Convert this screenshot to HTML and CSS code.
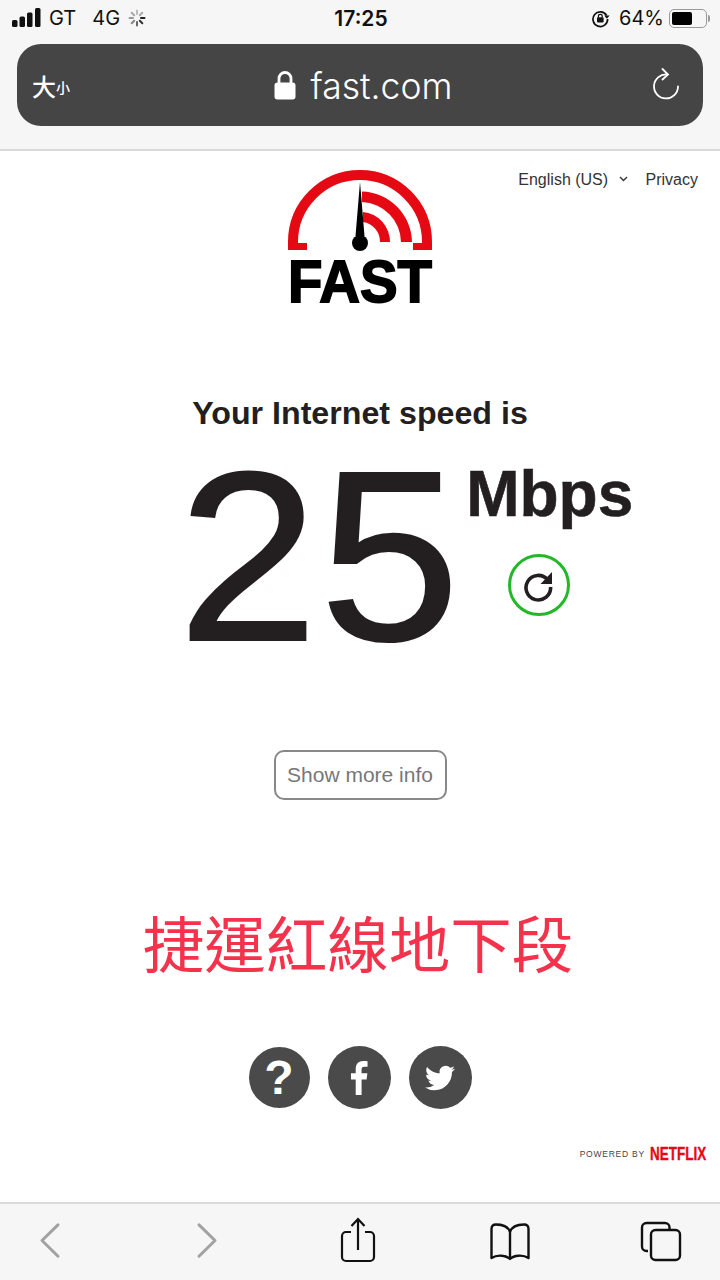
FILE: index.html
```html
<!DOCTYPE html>
<html lang="en">

<head>
    <meta charset="UTF-8" />
    <meta name="viewport" content="width=device-width, initial-scale=1.0" />
    <title>Internet Speed</title>
    <link rel="stylesheet" href="styles.css">
</head>

<body>

    <header class="browser-top">
        <div class="status-bar">
            <div class="status-left">
                <svg class="signal" width="30" height="20" viewBox="0 0 30 20">
                    <rect x="0" y="12" width="5.500" height="7" rx="1.500" />
                    <rect x="7.500" y="8.500" width="5.500" height="10.500" rx="1.500" />
                    <rect x="15" y="4.500" width="5.500" height="14.500" rx="1.500" />
                    <rect x="23" y="0" width="5.500" height="19" rx="1.500" />
                </svg>
                <span class="carrier">GT</span>
                <span class="network">4G</span>
                <svg class="spinner" width="18" height="18" viewBox="0 0 18 18" stroke-width="2" stroke-linecap="round">
                    <path d="M9 1.500V5" stroke="#bbb" />
                    <path d="M14.300 3.700L11.800 6.200" stroke="#aaa" />
                    <path d="M16.500 9H13" stroke="#222" />
                    <path d="M14.300 14.300L11.800 11.800" stroke="#333" />
                    <path d="M9 16.500V13" stroke="#666" />
                    <path d="M3.700 14.300L6.200 11.800" stroke="#888" />
                    <path d="M1.500 9H5" stroke="#999" />
                    <path d="M3.700 3.700L6.200 6.200" stroke="#aaa" />
                </svg>
            </div>
            <div class="status-time">17:25</div>
            <div class="status-right">
                <svg class="rotation-lock" width="19" height="19" viewBox="0 0 19 19">
                    <path d="M15.600 6.500A7.300 7.300 0 1 0 16.600 10" fill="none" stroke="#111" stroke-width="1.700" />
                    <path d="M13.200 6.400h5.400l-2.700 3.400z" fill="#111" />
                    <rect x="6" y="8.300" width="6.600" height="5.200" rx="1" fill="#111" />
                    <path d="M7.400 8.500V7.300a1.900 1.900 0 0 1 3.800 0v1.200" fill="none" stroke="#111" stroke-width="1.200" />
                </svg>
                <span class="battery-pct">64%</span>
                <div class="battery">
                    <div class="battery-fill" style="width: 64%"></div>
                </div>
                <div class="battery-nub"></div>
            </div>
        </div>

        <div class="address-bar">
            <div class="text-size"><span class="big">大</span><span class="small">小</span></div>
            <div class="url">
                <svg width="22" height="30" viewBox="0 0 22 30">
                    <path d="M5 14V8.500a6 6 0 0 1 12 0V14" fill="none" stroke="#fff" stroke-width="2.800" />
                    <rect x="0.500" y="12.500" width="21" height="17" rx="3" fill="#fff" />
                </svg>
                <span class="url-text">fast.com</span>
            </div>
            <svg class="reload" width="30" height="34" viewBox="0 0 30 34" fill="none" stroke="#fff" stroke-width="1.800" stroke-linecap="round">
                <path d="M16 6.500A12 12 0 1 0 27 18.500" />
                <path d="M11.500 1L17 6.500L11.500 11.500" />
            </svg>
        </div>
    </header>

    <main class="page">
        <div class="page-top">
            <svg class="logo" width="170" height="150" viewBox="275 168 170 150">
                <path d="M293 248V242a67 67 0 0 1 134 0V248" fill="none" stroke="#e50914" stroke-width="10" />
                <rect x="288" y="243" width="19" height="7" fill="#e50914" />
                <rect x="413" y="243" width="19" height="7" fill="#e50914" />
                <path d="M362 191.500A51.500 51.500 0 0 1 412 242H401A40.500 40.500 0 0 0 362 202Z" fill="#e50914" />
                <path d="M363 212A30 30 0 0 1 390 242H380A20 20 0 0 0 363 222Z" fill="#e50914" />
                <path d="M360 182L364.500 236H355.500Z" fill="#000" />
                <circle cx="360" cy="243" r="8" fill="#000" />
                <text class="logo-text" x="288" y="302" textLength="144" lengthAdjust="spacingAndGlyphs">FAST</text>
            </svg>
            <nav class="top-links">
                <a class="lang">English (US)
                    <svg width="9" height="6" viewBox="0 0 9 6" fill="none" stroke="#333" stroke-width="1.400">
                        <path d="M1 1l3.500 3.500L8 1" />
                    </svg>
                </a>
                <a>Privacy</a>
            </nav>
        </div>

        <h1 class="speed-title">Your Internet speed is</h1>

        <div class="speed-row">
            <div class="speed-value">25</div>
            <div class="speed-side">
                <div class="speed-units">Mbps</div>
                <div class="retest">
                    <svg width="34" height="34" viewBox="0 0 34 34" fill="none">
                        <path d="M25.500 11.500A12.300 12.300 0 1 0 28.600 19" stroke="#231f20" stroke-width="3.600" />
                        <path d="M18.500 16L30 4V16Z" fill="#231f20" />
                    </svg>
                </div>
            </div>
        </div>

        <button class="more-info">Show more info</button>

        <div class="caption">捷運紅線地下段</div>

        <div class="social">
            <div class="social-btn help">?</div>
            <div class="social-btn">
                <svg width="19" height="36" viewBox="0 0 20 38" fill="#fff">
                    <path d="M6 37V20.500H1V14H6V9.500C6 4 9 1 14 1C16 1 18 1.200 18.500 1.300V7H15C12.800 7 12.200 8 12.200 10V14H18.300L17.500 20.500H12.200V37Z" />
                </svg>
            </div>
            <div class="social-btn">
                <svg width="30" height="30" viewBox="0 0 24 24" fill="#fff">
                    <path d="M23.953 4.570a10 10 0 01-2.825.775 4.958 4.958 0 002.163-2.723c-.951.555-2.005.959-3.127 1.184a4.920 4.920 0 00-8.384 4.482C7.690 8.095 4.067 6.130 1.640 3.162a4.822 4.822 0 00-.666 2.475c0 1.710.870 3.213 2.188 4.096a4.904 4.904 0 01-2.228-.616v.060a4.923 4.923 0 003.946 4.827 4.996 4.996 0 01-2.212.085 4.936 4.936 0 004.604 3.417 9.867 9.867 0 01-6.102 2.105c-.390 0-.779-.023-1.170-.067a13.995 13.995 0 007.557 2.209c9.053 0 13.998-7.496 13.998-13.985 0-.210 0-.420-.015-.630A9.935 9.935 0 0024 4.590z" />
                </svg>
            </div>
        </div>

        <div class="powered">
            <span>POWERED BY</span>
            <span class="netflix">NETFLIX</span>
        </div>
    </main>

    <footer class="toolbar">
        <svg class="tool tool-back" width="44" height="44" viewBox="0 0 44 44" fill="none" stroke="#a2a2a2" stroke-width="3" stroke-linecap="round" stroke-linejoin="round">
            <path d="M30 7L14 23L30 39" transform="translate(0 -1) scale(1 .98)" />
        </svg>
        <svg class="tool" width="44" height="44" viewBox="0 0 44 44" fill="none" stroke="#a2a2a2" stroke-width="3" stroke-linecap="round" stroke-linejoin="round">
            <path d="M14 7L30 23L14 39" transform="translate(0 -1) scale(1 .98)" />
        </svg>
        <svg class="tool tool-share" width="44" height="46" viewBox="0 0 44 46" fill="none" stroke="#111" stroke-width="2.200">
            <path d="M15 15H10A4 4 0 0 0 6 19V40A4 4 0 0 0 10 44H34A4 4 0 0 0 38 40V19A4 4 0 0 0 34 15H29" />
            <path d="M22 33V2M15.500 9L22 2L28.500 9" />
        </svg>
        <svg class="tool tool-book" width="44" height="44" viewBox="0 0 44 44" fill="none" stroke="#111" stroke-width="2.400" stroke-linejoin="round">
            <path d="M22 12C20 6 14 4.500 8 4.500C5 4.500 3.500 6 3.500 9V38C9 34.500 18 35 22 39C26 35 35 34.500 40.500 38V9C40.500 6 39 4.500 36 4.500C30 4.500 24 6 22 12ZM22 12V39" />
        </svg>
        <svg class="tool" width="44" height="44" viewBox="0 0 44 44" fill="none" stroke="#111" stroke-width="2.400">
            <path d="M9 32H7.500A4.500 4.500 0 0 1 3 27.500V8.500A4.500 4.500 0 0 1 7.500 4H26A4.500 4.500 0 0 1 30.500 8.500V11" />
            <rect x="12" y="11" width="29" height="30" rx="4.500" />
        </svg>
    </footer>

</body>

</html>
```

FILE: styles.css
```css
html,
body {
    margin: 0;
    padding: 0;
    background: #fff;
    font-family: 'Liberation Sans', Arial, sans-serif;
    color: #231f20;
}

body {
    width: 720px;
    height: 1280px;
    overflow: hidden;
    display: flex;
    flex-direction: column;
}

/* Safari chrome */
.browser-top {
    height: 151px;
    box-sizing: border-box;
    background: #f6f6f6;
    border-bottom: 2px solid #dadada;
}

.status-bar {
    height: 36px;
    padding: 0 10px 0 12px;
    display: grid;
    grid-template-columns: 1fr auto 1fr;
    align-items: center;
    font-family: Inter, sans-serif;
    font-size: 20px;
    color: #111;
}

.status-left,
.status-right {
    display: flex;
    align-items: center;
}

.status-right {
    justify-content: flex-end;
}

.signal {
    fill: #111;
}

.carrier {
    margin-left: 7px;
}

.network {
    margin-left: 16px;
}

.spinner {
    margin-left: 8px;
}

.status-time {
    font-size: 21px;
    font-weight: 600;
}

.battery-pct {
    margin-left: 9px;
}

.battery {
    width: 38px;
    height: 19px;
    margin-left: 5px;
    padding: 2px;
    box-sizing: border-box;
    border: 1.5px solid #999;
    border-radius: 5px;
}

.battery-fill {
    height: 100%;
    background: #000;
    border-radius: 2px;
}

.battery-nub {
    width: 2px;
    height: 7px;
    margin-left: 1px;
    background: #999;
    border-radius: 0 2px 2px 0;
}

.rotation-lock {
    flex: none;
}

.address-bar {
    height: 82px;
    margin: 8px 17px 0;
    padding: 0 15px;
    display: grid;
    grid-template-columns: 1fr auto 1fr;
    align-items: center;
    background: #454545;
    border-radius: 24px;
    color: #fff;
}

.text-size {
    font-family: 'Noto Sans CJK TC', sans-serif;
    font-weight: 500;
    display: flex;
    align-items: center;
}

.big {
    font-size: 24px;
}

.small {
    font-size: 14px;
    margin-top: 3px;
}

.url {
    display: flex;
    align-items: center;
    gap: 15px;
    margin-left: 6px;
    font-family: Inter, sans-serif;
    font-size: 35.5px;
    font-weight: 300;
}

.url-text {
    margin-top: 3px;
}

.reload {
    justify-self: end;
    margin-right: 7px;
}

/* page */
.page {
    flex: 1;
    display: flex;
    flex-direction: column;
    align-items: center;
}

.page-top {
    width: 100%;
    height: 136px;
    margin-top: 17px;
    display: grid;
    grid-template-columns: 1fr auto 1fr;
}

.logo {
    grid-column: 2;
}

.logo-text {
    font-family: 'Liberation Sans', sans-serif;
    font-weight: 700;
    font-size: 60px;
    stroke: #000;
    stroke-width: 1.8px;
    fill: #000;
}

.top-links {
    display: flex;
    justify-content: flex-end;
    gap: 18px;
    padding: 2px 22px 0 0;
    font-size: 16px;
    color: #333;
    line-height: 20px;
}

.lang svg {
    margin: 0 0 3px 6px;
}

.speed-title {
    margin: 90px 0 0;
    font-size: 32.2px;
    line-height: 38px;
    font-weight: 700;
}

.speed-row {
    align-self: flex-start;
    display: flex;
    margin: 2px 0 0 178px;
    height: 240px;
}

.speed-value {
    font-size: 242px;
    line-height: 200px;
    height: 200px;
    margin-top: 22px;
    letter-spacing: 1.8px;
    transform: scaleX(1.04);
    transform-origin: left center;
    -webkit-text-stroke: 2px #231f20;
}

.speed-side {
    margin-left: 15.4px;
    display: flex;
    flex-direction: column;
    align-items: center;
}

.speed-units {
    font-size: 64px;
    font-weight: 700;
    line-height: 76px;
    margin-top: 22px;
    -webkit-text-stroke: 0.6px #231f20;
}

.retest {
    width: 62px;
    height: 62px;
    margin: 22px 21px 0 0;
    box-sizing: border-box;
    border: 3px solid #22b82a;
    border-radius: 50%;
    display: flex;
    align-items: center;
    justify-content: center;
}

.more-info {
    width: 173px;
    height: 50px;
    margin-top: 76px;
    padding: 0;
    background: #fff;
    border: 2px solid #888;
    border-radius: 10px;
    color: #777;
    font-family: 'Liberation Sans', sans-serif;
    font-size: 21px;
}

.caption {
    margin-top: 103px;
    font-family: 'Noto Sans CJK TC', sans-serif;
    font-size: 61.5px;
    line-height: 78px;
    color: #f5324b;
    transform: translateX(-2px);
}

.social {
    display: flex;
    gap: 18px;
    margin-top: 65px;
    align-items: center;
}

.social-btn {
    width: 63px;
    height: 63px;
    background: #4a4a4a;
    border-radius: 50%;
    display: flex;
    align-items: center;
    justify-content: center;
    color: #fff;
}

.help {
    width: 61px;
    height: 61px;
    font-size: 48px;
    font-weight: 700;
}

.powered {
    align-self: flex-end;
    display: flex;
    align-items: center;
    margin: 36px 14px 0 0;
    height: 18px;
    font-size: 8.5px;
    letter-spacing: 0.75px;
    color: #444;
}

.netflix {
    margin-left: -18px;
    font-weight: 700;
    font-size: 19px;
    letter-spacing: 0;
    color: #e50914;
    transform: scaleX(0.71);
    transform-origin: right center;
    -webkit-text-stroke: 0.4px #e50914;
}

/* bottom toolbar */
.toolbar {
    height: 78px;
    box-sizing: border-box;
    padding: 15px 0 0 28px;
    display: flex;
    gap: 107.5px;
    align-items: flex-start;
    background: #f6f6f6;
    border-top: 2px solid #dadada;
}

.tool-back {
    margin-right: 5px;
}

.tool-share {
    margin-top: -2px;
}

.tool-book {
    margin-top: 1px;
}
```
